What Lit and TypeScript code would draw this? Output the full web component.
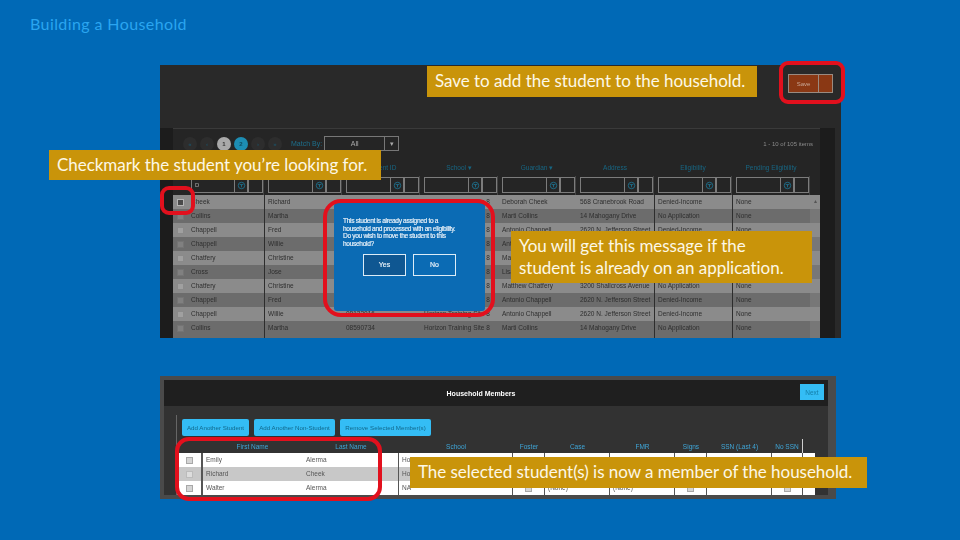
import { LitElement, html, css, svg } from "lit";
import { customElement } from "lit/decorators.js";

const upperRows = [
  ["Cheek", "Richard", "08122016", "Horizon Training Site 8", "Deborah Cheek", "568 Cranebrook Road", "Denied-Income", "None"],
  ["Collins", "Martha", "08590734", "Horizon Training Site 8", "Marti Collins", "14 Mahogany Drive", "No Application", "None"],
  ["Chappell", "Fred", "08122014", "Horizon Training Site 8", "Antonio Chappell", "2620 N. Jefferson Street", "Denied-Income", "None"],
  ["Chappell", "Willie", "08122016", "Horizon Training Site 8", "Antonio Chappell", "2620 N. Jefferson Street", "Denied-Income", "None"],
  ["Chatfery", "Christine", "08122018", "Horizon Training Site 8", "Matthew Chatfery", "3200 Shallcross Avenue", "No Application", "None"],
  ["Cross", "Jose", "08122019", "Horizon Training Site 8", "Lisa Cross", "1201 Magnolia Avenue", "No Application", "None"],
  ["Chatfery", "Christine", "08122018", "Horizon Training Site 8", "Matthew Chatfery", "3200 Shallcross Avenue", "No Application", "None"],
  ["Chappell", "Fred", "08122014", "Horizon Training Site 8", "Antonio Chappell", "2620 N. Jefferson Street", "Denied-Income", "None"],
  ["Chappell", "Willie", "08122016", "Horizon Training Site 8", "Antonio Chappell", "2620 N. Jefferson Street", "Denied-Income", "None"],
  ["Collins", "Martha", "08590734", "Horizon Training Site 8", "Marti Collins", "14 Mahogany Drive", "No Application", "None"],
];

const upperHeads = ["Last Name", "First Name", "Student ID", "School ▾", "Guardian ▾", "Address", "Eligibility", "Pending Eligibility"];

const lowerHeads = ["First Name", "Last Name", "School", "Foster", "Case", "FMR", "Signs", "SSN (Last 4)", "No SSN"];
const lowerRows = [
  ["Emily", "Alerma", "Horizon Training Site 8", "", "(None)", "(None)"],
  ["Richard", "Cheek", "Horizon Training Site 8", "", "(None)", "(None)"],
  ["Walter", "Alerma", "NA", "", "(None)", "(None)"],
];

const filterIcon = svg`<svg class="fi" viewBox="0 0 10 10"><circle cx="5" cy="5" r="3.6" fill="none" stroke="#1d6f8c" stroke-width="1"/><path d="M3 4h4M5 4v3" stroke="#1d6f8c" stroke-width="1"/></svg>`;

@customElement("app-root")
export class AppRoot extends LitElement {
  static styles = css`
    :host {
      display: block;
      width: 960px;
      height: 540px;
      overflow: hidden;
      background: #0069b6;
      font-family: "Liberation Sans", Arial, sans-serif;
    }
    .slide {
      position: relative;
      width: 960px;
      height: 540px;
      box-sizing: border-box;
      padding: 14px 0 0 30px;
    }
    .title {
      font: 16px/20px Lato, "Open Sans", sans-serif;
      color: #2aa5f0;
      height: 20px;
      letter-spacing: 0.4px;
    }
    /* upper screenshot */
    .win1 {
      width: 681px;
      height: 273px;
      margin: 31px 0 0 130px;
      background: #292929;
      display: flex;
      flex-direction: column;
      overflow: hidden;
      filter: blur(0.35px);
    }
    .win1-head {
      height: 63px;
      flex: none;
      display: flex;
      justify-content: flex-end;
      box-sizing: border-box;
      padding: 9px 8px 0 0;
    }
    .save {
      display: flex;
      width: 43px;
      height: 17px;
      border: 1px solid #9a8a80;
      background: #8a3814;
      color: #c9a796;
      font-size: 6px;
    }
    .save span:first-child {
      flex: 1;
      display: flex;
      align-items: center;
      justify-content: center;
      border-right: 1px solid #9a8a80;
    }
    .save span:last-child {
      width: 13px;
    }
    .win1-body {
      flex: 1;
      display: flex;
      background: #1c1c1c;
      min-height: 0;
    }
    .edge {
      width: 6px;
      flex: none;
      margin-left: auto;
      background: #292929;
    }
    .pane {
      margin-left: 13px;
      width: 647px;
      background: #252525;
      border-top: 1px solid #3a3a3a;
      flex: none;
      display: flex;
      flex-direction: column;
    }
    .pager {
      height: 29px;
      flex: none;
      display: flex;
      align-items: center;
      padding-left: 10px;
      gap: 3px;
      font-size: 7px;
      color: #1d6f8c;
    }
    .dot {
      width: 14px;
      height: 14px;
      border-radius: 50%;
      display: flex;
      align-items: center;
      justify-content: center;
      font-size: 6px;
      font-weight: bold;
      color: #333;
      flex: none;
    }
    .dot.off { background: #2d2d2d; color: #1d4f63; }
    .dot.grey { background: #a9a9a9; }
    .dot.teal { background: #1d8db3; color: #0d4c62; }
    .match { margin-left: 6px; }
    .select {
      display: flex;
      width: 75px;
      height: 15px;
      border: 1px solid #777;
      color: #aaa;
      margin-left: -1px;
      box-sizing: border-box;
    }
    .select span:first-child {
      flex: 1;
      text-align: center;
      line-height: 13px;
      border-right: 1px solid #777;
    }
    .select span:last-child { width: 13px; text-align: center; line-height: 13px; }
    .count {
      margin-left: auto;
      padding-right: 7px;
      color: #8b8b8b;
      font-size: 6px;
    }
    .grid {
      display: grid;
      grid-template-columns: 14px 77px repeat(7, 78px) 10px;
      font-size: 6.5px;
      white-space: nowrap;
    }
    .head {
      height: 18px;
      line-height: 20px;
      text-align: center;
      color: #176683;
    }
    .filter {
      height: 19px;
      box-sizing: border-box;
      display: flex;
      padding: 1px 0 2px 4px;
      border-right: 1px solid #444;
    }
    .filter.plain { border: 0; }
    .box {
      flex: 1;
      display: flex;
      border: 1px solid #7c7c7c;
      color: #aaa;
      font-size: 6px;
      line-height: 14px;
      padding-left: 3px;
    }
    .box i { flex: 1; font-style: normal; }
    .box b {
      width: 12px;
      display: flex;
      align-items: center;
      justify-content: center;
      border-left: 1px solid #7c7c7c;
      border-right: 2px solid #7c7c7c;
    }
    .box u { width: 13px; }
    .fi { width: 9px; height: 9px; }
    .cell {
      height: 14px;
      line-height: 14px;
      color: #2e2e2e;
      padding-left: 4px;
      overflow: hidden;
    }
    .cell.tall { height: 17px; }
    .cell.ck { padding: 0; display: flex; align-items: flex-start; justify-content: center; }
    .cell.ck .chk { margin-top: 4px; }
    .cell.rule { border-left: 1px solid #2d2d2d; padding-left: 3px; }
    .cell.l { background: #8b8b8b; }
    .cell.d { background: #6c6c6c; }
    .chk {
      width: 5px;
      height: 5px;
      background: #a0a0a0;
      border: 1px solid #8a8a8a;
    }
    .d .chk { background: #808080; border-color: #747474; }
    .chk.on { background: #4a4a4a; border-color: #b5b5b5; }
    .sb { background: #8b8b8b; color: #555; text-align: center; line-height: 12px; font-size: 6px; }
    .sb.d { background: #777; }

    /* lower screenshot */
    .win2 {
      width: 676px;
      height: 123px;
      margin: 38px 0 0 130px;
      box-sizing: border-box;
      border: solid #4a4a4a;
      border-width: 4px 8px 4px 4px;
      background: #323232;
      display: flex;
      flex-direction: column;
      overflow: hidden;
      filter: blur(0.35px);
    }
    .win2-head {
      height: 26px;
      flex: none;
      background: #1f1f1f;
      display: flex;
      align-items: center;
      justify-content: center;
      position: relative;
      color: #fff;
      font-size: 7px;
      font-weight: bold;
      box-sizing: border-box;
      padding-right: 30px;
    }
    .next {
      position: absolute;
      right: 4px;
      top: 4px;
      width: 24px;
      height: 16px;
      background: #34bdf5;
      color: #137ea8;
      font-size: 6.5px;
      font-weight: normal;
      display: flex;
      align-items: center;
      justify-content: center;
    }
    .win2-body {
      flex: 1;
      margin: 9px 0 0 12px;
      border-left: 1px solid #666;
      padding: 4px 0 0 5px;
      min-height: 0;
    }
    .btns {
      display: flex;
      gap: 5px;
      height: 17px;
    }
    .btn {
      background: #34bdf5;
      color: #12688c;
      font-size: 6.2px;
      white-space: nowrap;
      border-radius: 2px;
      display: flex;
      align-items: center;
      justify-content: center;
    }
    .btn.a { width: 67px; }
    .btn.b { width: 81px; }
    .btn.c { width: 91px; }
    .tbl {
      display: grid;
      grid-template-columns: 25px 101px 96px 114px 32px 65px 65px 32px 65px 31px 12px;
      margin: 3px 0 0 -5px;
      font-size: 6.5px;
      white-space: nowrap;
    }
    .th {
      height: 14px;
      line-height: 16px;
      text-align: center;
      color: #3fa6d8;
    }
    .th.last { border-right: 1px solid #cfcfcf; }
    .td {
      height: 14px;
      line-height: 14px;
      color: #555;
      background: #fff;
      padding-left: 3px;
      box-sizing: border-box;
      border-right: 1px solid #555;
      overflow: hidden;
    }
    .td.sel { background: #c8c8c8; }
    .td.c { padding: 0; display: flex; align-items: center; justify-content: center; }
    .td.nb { border-right: 0; }
    .td.lead { border-left: 1px solid #555; }
    .chk2 { width: 5px; height: 5px; background: #d5d5d5; border: 1px solid #a8a8a8; }
    .td.sel .chk2 { background: #ddd; border-color: #bbb; }

    /* overlays */
    .dialog {
      position: absolute;
      left: 334px;
      top: 203px;
      width: 151px;
      height: 108px;
      background: #0b6bb4;
      box-sizing: border-box;
      padding: 14px 0 0 9px;
      color: #eef5fb;
      font-size: 6.6px;
      line-height: 7.5px;
      letter-spacing: -0.32px;
      -webkit-text-stroke: 0.15px #eef5fb;
      white-space: nowrap;
      border-radius: 3px;
      filter: blur(0.25px);
    }
    .dialog-btns {
      display: flex;
      gap: 7px;
      margin: 7px 0 0 20px;
      letter-spacing: 0;
    }
    .dialog-btns span {
      width: 41px;
      height: 20px;
      border: 1px solid #dcecf7;
      display: flex;
      align-items: center;
      justify-content: center;
      font-size: 7px;
    }
    .dialog-btns .yes { background: #0f5792; }
    .ring {
      position: absolute;
      box-sizing: border-box;
      border: 4px solid #e2101d;
      border-radius: 9px;
    }
    .ring.save-r { left: 779px; top: 61px; width: 66px; height: 43px; }
    .ring.check-r { left: 160px; top: 186px; width: 35px; height: 29px; }
    .ring.dlg-r { left: 323px; top: 199px; width: 172px; height: 118px; border-radius: 18px; }
    .ring.low-r { left: 175px; top: 437px; width: 207px; height: 64px; border-radius: 14px; }
    .call {
      position: absolute;
      box-sizing: border-box;
      background: #c9940a;
      color: #fdf8e6;
      font: 17px/22px Lato, "Open Sans", sans-serif;
      letter-spacing: -0.04px;
      white-space: nowrap;
      padding: 4px 8px;
    }
    .call.c1 { left: 427px; top: 66px; width: 330px; height: 31px; }
    .call.c2 { left: 49px; top: 150px; width: 332px; height: 30px; }
    .call.c3 { left: 511px; top: 231px; width: 301px; height: 52px; }
    .call.c4 { left: 410px; top: 457px; width: 457px; height: 31px; }
  `;

  render() {
    return html`
      <div class="slide">
        <div class="title">Building a Household</div>

        <div class="win1">
          <div class="win1-head">
            <div class="save"><span>Save</span><span></span></div>
          </div>
          <div class="win1-body">
            <div class="pane">
              <div class="pager">
                <span class="dot off">«</span><span class="dot off">‹</span>
                <span class="dot grey">1</span><span class="dot teal">2</span>
                <span class="dot off">›</span><span class="dot off">»</span>
                <span class="match">Match By:</span>
                <span class="select"><span>All</span><span>▾</span></span>
                <span class="count">1 - 10 of 105 items</span>
              </div>
              <div class="grid">
                <div class="head"></div>
                ${upperHeads.map((h) => html`<div class="head">${h}</div>`)}
                <div class="head"></div>
                <div class="filter plain"></div>
                ${upperHeads.map(
                  (_, i) => html`<div class="filter"><div class="box"><i>${i === 0 ? "D" : ""}</i><b>${filterIcon}</b><u></u></div></div>`
                )}
                <div class="filter plain"></div>
                ${upperRows.map((r, i) => {
                  const t = (i % 2 ? "d" : "l") + (i === upperRows.length - 1 ? " tall" : "");
                  return html`
                    <div class="cell ck ${t}"><span class="chk ${i === 0 ? "on" : ""}"></span></div>
                    ${r.map((c, j) => html`<div class="cell ${t} ${j === 1 || j >= 6 ? "rule" : ""}">${c}</div>`)}
                    <div class="sb ${t}">${i === 0 ? "▴" : ""}</div>
                  `;
                })}
              </div>
            </div>
            <div class="edge"></div>
          </div>
        </div>

        <div class="win2">
          <div class="win2-head">Household Members<span class="next">Next</span></div>
          <div class="win2-body">
            <div class="btns">
              <span class="btn a">Add Another Student</span>
              <span class="btn b">Add Another Non-Student</span>
              <span class="btn c">Remove Selected Member(s)</span>
            </div>
            <div class="tbl">
              <div class="th"></div>
              ${lowerHeads.map((h, i) => html`<div class="th ${i === 8 ? "last" : ""}">${h}</div>`)}
              <div class="th"></div>
              ${lowerRows.map((r, i) => {
                const s = i === 1 ? "sel" : "";
                return html`
                  <div class="td c ${s}"><span class="chk2"></span></div>
                  <div class="td ${s} nb lead">${r[0]}</div>
                  <div class="td ${s}">${r[1]}</div>
                  <div class="td ${s}">${r[2]}</div>
                  <div class="td c ${s}"><span class="chk2"></span></div>
                  <div class="td ${s}">${r[4]}</div>
                  <div class="td ${s}">${r[5]}</div>
                  <div class="td c ${s}"><span class="chk2"></span></div>
                  <div class="td ${s}"></div>
                  <div class="td c ${s}"><span class="chk2"></span></div>
                  <div class="td nb ${s}"></div>
                `;
              })}
            </div>
          </div>
        </div>

        <div class="dialog">
          This student is already assigned to a<br />household and processed with an eligibility.<br />Do you wish to move the student to this<br />household?
          <div class="dialog-btns"><span class="yes">Yes</span><span>No</span></div>
        </div>

        <div class="ring save-r"></div>
        <div class="ring check-r"></div>
        <div class="ring dlg-r"></div>
        <div class="ring low-r"></div>

        <div class="call c1">Save to add the student to the household.</div>
        <div class="call c2">Checkmark the student you’re looking for.</div>
        <div class="call c3">You will get this message if the<br />student is already on an application.</div>
        <div class="call c4">The selected student(s) is now a member of the household.</div>
      </div>
    `;
  }
}
